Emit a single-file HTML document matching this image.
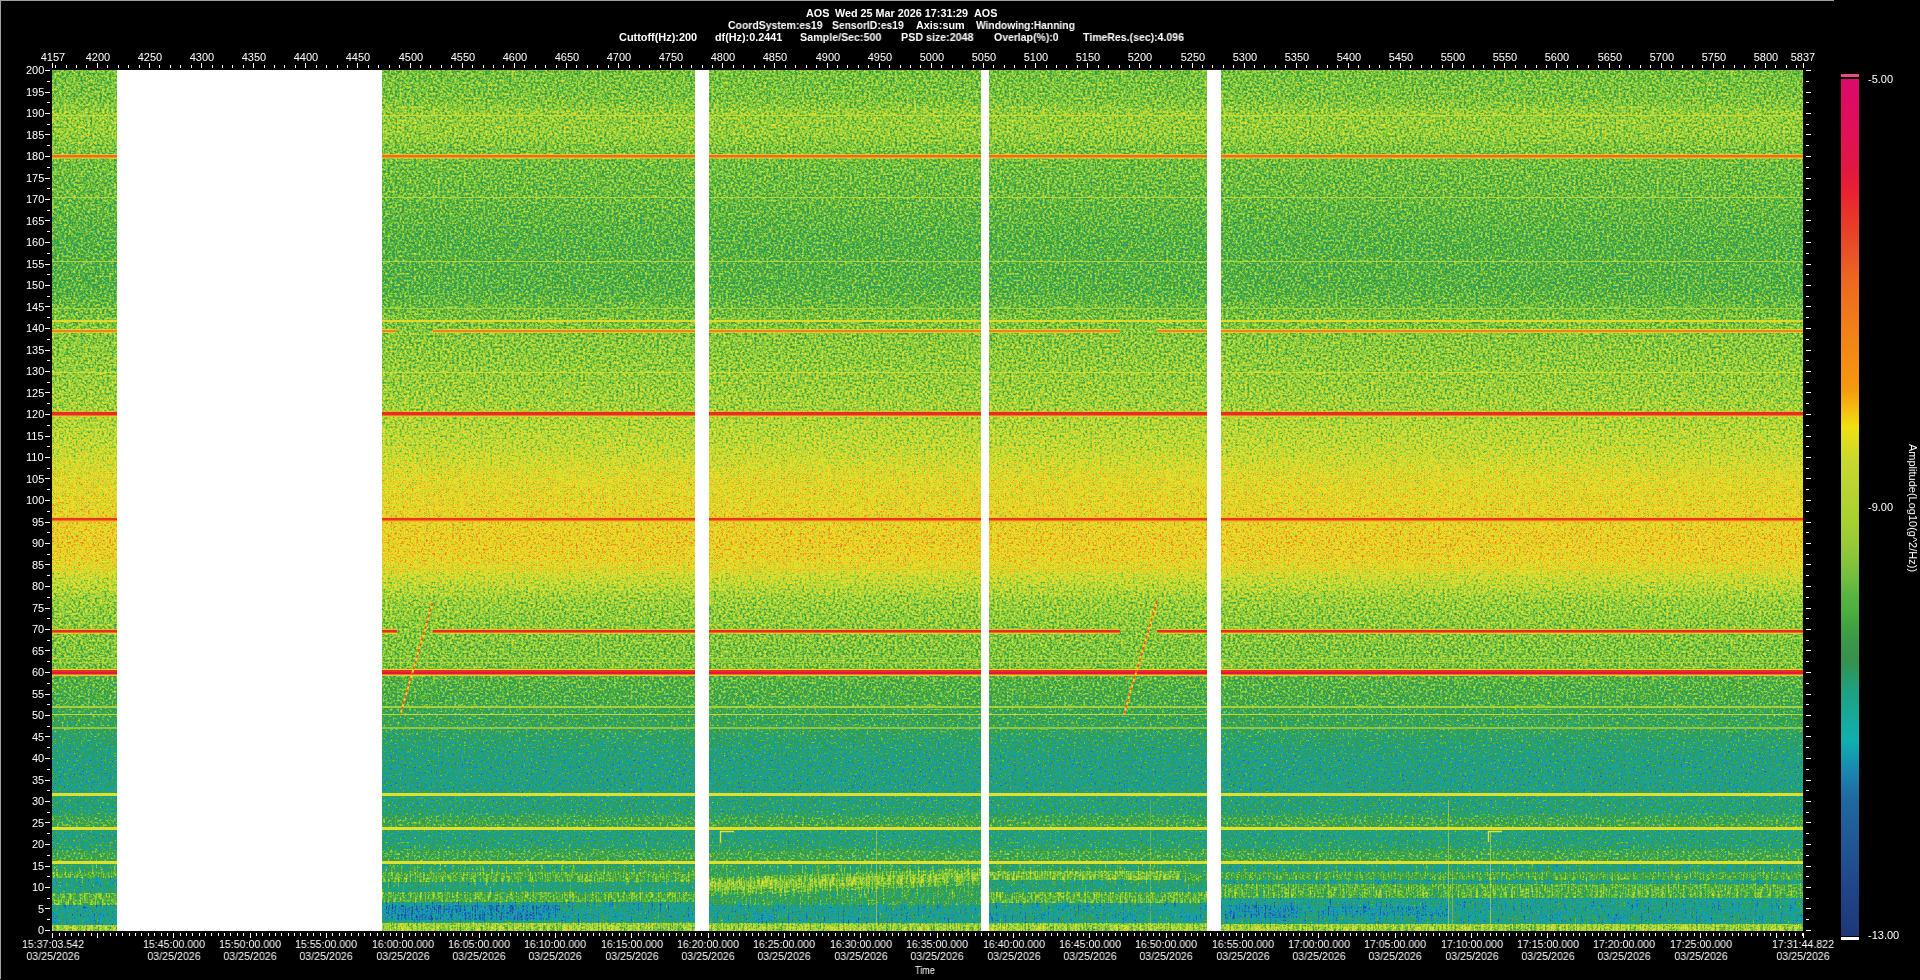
<!DOCTYPE html><html><head><meta charset="utf-8"><style>
html,body{margin:0;padding:0;background:#000;width:1920px;height:980px;overflow:hidden;}
body{position:relative;font-family:"Liberation Sans",sans-serif;color:#fff;}
.t{position:absolute;white-space:pre;line-height:12px;font-size:11px;will-change:transform;}
.b{font-size:10.8px;font-weight:bold;}
.c{text-align:center;width:1200px;}
svg{position:absolute;left:0;top:0;}
</style></head><body>
<div style="position:absolute;left:0;top:0;width:1834px;height:1px;background:#a0a0a0"></div>
<div style="position:absolute;left:0;top:0;width:1px;height:979px;background:#a0a0a0"></div>
<svg width="1920" height="980"><defs><linearGradient id="amp" gradientUnits="userSpaceOnUse" x1="0" y1="70" x2="0" y2="931"><stop offset="0.0000" stop-color="rgb(111,111,111)"/><stop offset="0.0348" stop-color="rgb(113,113,113)"/><stop offset="0.0488" stop-color="rgb(120,120,120)"/><stop offset="0.0755" stop-color="rgb(120,120,120)"/><stop offset="0.0929" stop-color="rgb(113,113,113)"/><stop offset="0.1069" stop-color="rgb(110,110,110)"/><stop offset="0.1510" stop-color="rgb(107,107,107)"/><stop offset="0.1974" stop-color="rgb(102,102,102)"/><stop offset="0.2555" stop-color="rgb(102,102,102)"/><stop offset="0.2729" stop-color="rgb(107,107,107)"/><stop offset="0.2880" stop-color="rgb(112,112,112)"/><stop offset="0.3078" stop-color="rgb(116,116,116)"/><stop offset="0.3484" stop-color="rgb(119,119,119)"/><stop offset="0.3949" stop-color="rgb(124,124,124)"/><stop offset="0.4065" stop-color="rgb(128,128,128)"/><stop offset="0.4413" stop-color="rgb(134,134,134)"/><stop offset="0.4762" stop-color="rgb(147,147,147)"/><stop offset="0.5168" stop-color="rgb(152,152,152)"/><stop offset="0.5459" stop-color="rgb(156,156,156)"/><stop offset="0.5691" stop-color="rgb(153,153,153)"/><stop offset="0.5865" stop-color="rgb(139,139,139)"/><stop offset="0.6156" stop-color="rgb(122,122,122)"/><stop offset="0.6446" stop-color="rgb(117,117,117)"/><stop offset="0.6945" stop-color="rgb(112,112,112)"/><stop offset="0.7085" stop-color="rgb(102,102,102)"/><stop offset="0.7375" stop-color="rgb(97,97,97)"/><stop offset="0.7433" stop-color="rgb(92,92,92)"/><stop offset="0.7642" stop-color="rgb(89,89,89)"/><stop offset="0.7782" stop-color="rgb(82,82,82)"/><stop offset="0.8014" stop-color="rgb(76,76,76)"/><stop offset="0.8362" stop-color="rgb(75,75,75)"/><stop offset="0.8444" stop-color="rgb(79,79,79)"/><stop offset="0.8618" stop-color="rgb(79,79,79)"/><stop offset="0.8688" stop-color="rgb(92,92,92)"/><stop offset="0.8780" stop-color="rgb(94,94,94)"/><stop offset="0.8862" stop-color="rgb(76,76,76)"/><stop offset="0.9036" stop-color="rgb(82,82,82)"/><stop offset="0.9082" stop-color="rgb(94,94,94)"/><stop offset="0.9175" stop-color="rgb(94,94,94)"/><stop offset="0.9233" stop-color="rgb(79,79,79)"/><stop offset="0.9292" stop-color="rgb(79,79,79)"/><stop offset="0.9326" stop-color="rgb(97,97,97)"/><stop offset="0.9396" stop-color="rgb(94,94,94)"/><stop offset="0.9419" stop-color="rgb(74,74,74)"/><stop offset="0.9454" stop-color="rgb(76,76,76)"/><stop offset="0.9489" stop-color="rgb(99,99,99)"/><stop offset="0.9582" stop-color="rgb(99,99,99)"/><stop offset="0.9617" stop-color="rgb(76,76,76)"/><stop offset="0.9663" stop-color="rgb(69,69,69)"/><stop offset="0.9849" stop-color="rgb(66,66,66)"/><stop offset="0.9895" stop-color="rgb(71,71,71)"/><stop offset="0.9919" stop-color="rgb(128,128,128)"/><stop offset="0.9942" stop-color="rgb(143,143,143)"/><stop offset="1.0000" stop-color="rgb(138,138,138)"/></linearGradient><filter id="sp" filterUnits="userSpaceOnUse" x="52" y="70" width="1751" height="795" color-interpolation-filters="sRGB"><feTurbulence type="fractalNoise" baseFrequency="0.42 0.45" numOctaves="2" seed="3" result="n"/><feColorMatrix in="n" type="matrix" values="1 0 0 0 0 1 0 0 0 0 1 0 0 0 0 0 0 0 0 1" result="ng"/><feComposite in="SourceGraphic" in2="ng" operator="arithmetic" k1="0" k2="1" k3="0.440" k4="-0.220" result="a"/><feComponentTransfer in="a"><feFuncR type="table" tableValues="0.118 0.118 0.118 0.119 0.119 0.120 0.120 0.120 0.121 0.121 0.122 0.122 0.122 0.123 0.123 0.124 0.124 0.124 0.125 0.125 0.125 0.125 0.125 0.125 0.125 0.125 0.125 0.125 0.125 0.125 0.125 0.125 0.125 0.123 0.120 0.117 0.114 0.111 0.108 0.105 0.102 0.099 0.096 0.093 0.090 0.087 0.084 0.081 0.078 0.081 0.084 0.087 0.090 0.093 0.096 0.099 0.102 0.108 0.115 0.122 0.128 0.135 0.141 0.149 0.157 0.165 0.173 0.184 0.196 0.208 0.220 0.229 0.239 0.249 0.259 0.269 0.278 0.288 0.298 0.314 0.329 0.345 0.361 0.376 0.392 0.408 0.424 0.443 0.463 0.482 0.502 0.522 0.541 0.561 0.580 0.598 0.616 0.633 0.651 0.669 0.686 0.704 0.722 0.737 0.753 0.769 0.784 0.800 0.816 0.831 0.847 0.857 0.867 0.876 0.886 0.896 0.906 0.916 0.925 0.927 0.929 0.931 0.933 0.935 0.937 0.939 0.941 0.941 0.941 0.941 0.941 0.941 0.941 0.941 0.941 0.941 0.941 0.941 0.941 0.941 0.941 0.941 0.941 0.941 0.941 0.941 0.941 0.941 0.941 0.940 0.939 0.937 0.936 0.935 0.933 0.932 0.931 0.929 0.928 0.927 0.925 0.924 0.922 0.921 0.919 0.918 0.916 0.915 0.913 0.911 0.910 0.907 0.904 0.900 0.897 0.894 0.891 0.888 0.885 0.882 0.878 0.878 0.878 0.878 0.878 0.878 0.878 0.878 0.878 0.878 0.878 0.877 0.875 0.874 0.872 0.871 0.869 0.867 0.866 0.864 0.863"/><feFuncG type="table" tableValues="0.220 0.223 0.226 0.229 0.232 0.235 0.238 0.242 0.245 0.248 0.251 0.254 0.257 0.260 0.264 0.267 0.270 0.273 0.276 0.279 0.282 0.293 0.303 0.314 0.324 0.335 0.345 0.356 0.366 0.376 0.387 0.397 0.408 0.424 0.439 0.455 0.471 0.486 0.502 0.518 0.533 0.547 0.561 0.575 0.588 0.602 0.616 0.629 0.643 0.643 0.643 0.643 0.643 0.643 0.643 0.643 0.643 0.641 0.638 0.635 0.633 0.630 0.627 0.624 0.620 0.616 0.612 0.610 0.608 0.606 0.604 0.613 0.622 0.630 0.639 0.648 0.657 0.666 0.675 0.684 0.694 0.704 0.714 0.724 0.733 0.743 0.753 0.761 0.769 0.776 0.784 0.792 0.800 0.808 0.816 0.820 0.824 0.827 0.831 0.835 0.839 0.843 0.847 0.849 0.851 0.853 0.855 0.857 0.859 0.861 0.863 0.867 0.871 0.875 0.878 0.882 0.886 0.890 0.894 0.880 0.867 0.853 0.839 0.825 0.812 0.798 0.784 0.769 0.753 0.737 0.722 0.706 0.690 0.675 0.659 0.643 0.627 0.614 0.601 0.588 0.575 0.562 0.549 0.536 0.523 0.510 0.497 0.484 0.471 0.458 0.444 0.431 0.418 0.405 0.392 0.379 0.366 0.353 0.340 0.327 0.314 0.301 0.289 0.276 0.264 0.251 0.238 0.226 0.213 0.201 0.188 0.182 0.176 0.169 0.163 0.157 0.151 0.144 0.138 0.132 0.125 0.119 0.113 0.107 0.100 0.094 0.088 0.082 0.075 0.069 0.063 0.060 0.058 0.056 0.053 0.051 0.049 0.046 0.044 0.042 0.039"/><feFuncB type="table" tableValues="0.471 0.477 0.484 0.491 0.497 0.504 0.511 0.517 0.524 0.531 0.537 0.544 0.551 0.557 0.564 0.571 0.577 0.584 0.591 0.597 0.604 0.611 0.618 0.625 0.633 0.640 0.647 0.654 0.661 0.669 0.676 0.683 0.690 0.694 0.698 0.702 0.706 0.710 0.714 0.718 0.722 0.718 0.714 0.710 0.706 0.702 0.698 0.694 0.690 0.678 0.667 0.655 0.643 0.631 0.620 0.608 0.596 0.575 0.554 0.533 0.512 0.492 0.471 0.443 0.416 0.388 0.361 0.335 0.310 0.284 0.259 0.258 0.257 0.256 0.255 0.254 0.253 0.252 0.251 0.251 0.251 0.251 0.251 0.251 0.251 0.251 0.251 0.249 0.247 0.245 0.243 0.241 0.239 0.237 0.235 0.233 0.231 0.229 0.227 0.225 0.224 0.222 0.220 0.216 0.212 0.208 0.204 0.200 0.196 0.192 0.188 0.184 0.180 0.176 0.173 0.169 0.165 0.161 0.157 0.153 0.149 0.145 0.141 0.137 0.133 0.129 0.125 0.125 0.125 0.125 0.125 0.125 0.125 0.125 0.125 0.125 0.125 0.125 0.125 0.125 0.125 0.125 0.125 0.125 0.125 0.125 0.125 0.125 0.125 0.125 0.125 0.125 0.125 0.125 0.125 0.125 0.125 0.125 0.125 0.125 0.125 0.125 0.125 0.125 0.125 0.125 0.125 0.125 0.125 0.125 0.125 0.132 0.138 0.144 0.151 0.157 0.163 0.169 0.176 0.182 0.188 0.201 0.213 0.226 0.238 0.251 0.264 0.276 0.289 0.301 0.314 0.324 0.334 0.344 0.355 0.365 0.375 0.385 0.395 0.405 0.416"/><feFuncA type="identity"/></feComponentTransfer></filter><filter id="sp2" filterUnits="userSpaceOnUse" x="52" y="864" width="1751" height="67" color-interpolation-filters="sRGB"><feTurbulence type="fractalNoise" baseFrequency="0.5 0.55" numOctaves="2" seed="5" result="n"/><feColorMatrix in="n" type="matrix" values="1 0 0 0 0 1 0 0 0 0 1 0 0 0 0 0 0 0 0 1" result="ng"/><feComposite in="SourceGraphic" in2="ng" operator="arithmetic" k1="0" k2="1" k3="0.300" k4="-0.150" result="a"/><feTurbulence type="fractalNoise" baseFrequency="0.6 0.08" numOctaves="2" seed="16" result="n2"/><feColorMatrix in="n2" type="matrix" values="1 0 0 0 0 1 0 0 0 0 1 0 0 0 0 0 0 0 0 1" result="ng2"/><feComposite in="a" in2="ng2" operator="arithmetic" k1="0" k2="1" k3="0.320" k4="-0.160" result="a2"/><feComponentTransfer in="a2"><feFuncR type="table" tableValues="0.118 0.118 0.118 0.119 0.119 0.120 0.120 0.120 0.121 0.121 0.122 0.122 0.122 0.123 0.123 0.124 0.124 0.124 0.125 0.125 0.125 0.125 0.125 0.125 0.125 0.125 0.125 0.125 0.125 0.125 0.125 0.125 0.125 0.123 0.120 0.117 0.114 0.111 0.108 0.105 0.102 0.099 0.096 0.093 0.090 0.087 0.084 0.081 0.078 0.081 0.084 0.087 0.090 0.093 0.096 0.099 0.102 0.108 0.115 0.122 0.128 0.135 0.141 0.149 0.157 0.165 0.173 0.184 0.196 0.208 0.220 0.229 0.239 0.249 0.259 0.269 0.278 0.288 0.298 0.314 0.329 0.345 0.361 0.376 0.392 0.408 0.424 0.443 0.463 0.482 0.502 0.522 0.541 0.561 0.580 0.598 0.616 0.633 0.651 0.669 0.686 0.704 0.722 0.737 0.753 0.769 0.784 0.800 0.816 0.831 0.847 0.857 0.867 0.876 0.886 0.896 0.906 0.916 0.925 0.927 0.929 0.931 0.933 0.935 0.937 0.939 0.941 0.941 0.941 0.941 0.941 0.941 0.941 0.941 0.941 0.941 0.941 0.941 0.941 0.941 0.941 0.941 0.941 0.941 0.941 0.941 0.941 0.941 0.941 0.940 0.939 0.937 0.936 0.935 0.933 0.932 0.931 0.929 0.928 0.927 0.925 0.924 0.922 0.921 0.919 0.918 0.916 0.915 0.913 0.911 0.910 0.907 0.904 0.900 0.897 0.894 0.891 0.888 0.885 0.882 0.878 0.878 0.878 0.878 0.878 0.878 0.878 0.878 0.878 0.878 0.878 0.877 0.875 0.874 0.872 0.871 0.869 0.867 0.866 0.864 0.863"/><feFuncG type="table" tableValues="0.220 0.223 0.226 0.229 0.232 0.235 0.238 0.242 0.245 0.248 0.251 0.254 0.257 0.260 0.264 0.267 0.270 0.273 0.276 0.279 0.282 0.293 0.303 0.314 0.324 0.335 0.345 0.356 0.366 0.376 0.387 0.397 0.408 0.424 0.439 0.455 0.471 0.486 0.502 0.518 0.533 0.547 0.561 0.575 0.588 0.602 0.616 0.629 0.643 0.643 0.643 0.643 0.643 0.643 0.643 0.643 0.643 0.641 0.638 0.635 0.633 0.630 0.627 0.624 0.620 0.616 0.612 0.610 0.608 0.606 0.604 0.613 0.622 0.630 0.639 0.648 0.657 0.666 0.675 0.684 0.694 0.704 0.714 0.724 0.733 0.743 0.753 0.761 0.769 0.776 0.784 0.792 0.800 0.808 0.816 0.820 0.824 0.827 0.831 0.835 0.839 0.843 0.847 0.849 0.851 0.853 0.855 0.857 0.859 0.861 0.863 0.867 0.871 0.875 0.878 0.882 0.886 0.890 0.894 0.880 0.867 0.853 0.839 0.825 0.812 0.798 0.784 0.769 0.753 0.737 0.722 0.706 0.690 0.675 0.659 0.643 0.627 0.614 0.601 0.588 0.575 0.562 0.549 0.536 0.523 0.510 0.497 0.484 0.471 0.458 0.444 0.431 0.418 0.405 0.392 0.379 0.366 0.353 0.340 0.327 0.314 0.301 0.289 0.276 0.264 0.251 0.238 0.226 0.213 0.201 0.188 0.182 0.176 0.169 0.163 0.157 0.151 0.144 0.138 0.132 0.125 0.119 0.113 0.107 0.100 0.094 0.088 0.082 0.075 0.069 0.063 0.060 0.058 0.056 0.053 0.051 0.049 0.046 0.044 0.042 0.039"/><feFuncB type="table" tableValues="0.471 0.477 0.484 0.491 0.497 0.504 0.511 0.517 0.524 0.531 0.537 0.544 0.551 0.557 0.564 0.571 0.577 0.584 0.591 0.597 0.604 0.611 0.618 0.625 0.633 0.640 0.647 0.654 0.661 0.669 0.676 0.683 0.690 0.694 0.698 0.702 0.706 0.710 0.714 0.718 0.722 0.718 0.714 0.710 0.706 0.702 0.698 0.694 0.690 0.678 0.667 0.655 0.643 0.631 0.620 0.608 0.596 0.575 0.554 0.533 0.512 0.492 0.471 0.443 0.416 0.388 0.361 0.335 0.310 0.284 0.259 0.258 0.257 0.256 0.255 0.254 0.253 0.252 0.251 0.251 0.251 0.251 0.251 0.251 0.251 0.251 0.251 0.249 0.247 0.245 0.243 0.241 0.239 0.237 0.235 0.233 0.231 0.229 0.227 0.225 0.224 0.222 0.220 0.216 0.212 0.208 0.204 0.200 0.196 0.192 0.188 0.184 0.180 0.176 0.173 0.169 0.165 0.161 0.157 0.153 0.149 0.145 0.141 0.137 0.133 0.129 0.125 0.125 0.125 0.125 0.125 0.125 0.125 0.125 0.125 0.125 0.125 0.125 0.125 0.125 0.125 0.125 0.125 0.125 0.125 0.125 0.125 0.125 0.125 0.125 0.125 0.125 0.125 0.125 0.125 0.125 0.125 0.125 0.125 0.125 0.125 0.125 0.125 0.125 0.125 0.125 0.125 0.125 0.125 0.125 0.125 0.132 0.138 0.144 0.151 0.157 0.163 0.169 0.176 0.182 0.188 0.201 0.213 0.226 0.238 0.251 0.264 0.276 0.289 0.301 0.314 0.324 0.334 0.344 0.355 0.365 0.375 0.385 0.395 0.405 0.416"/><feFuncA type="identity"/></feComponentTransfer></filter></defs><g filter="url(#sp)"><rect x="52" y="70" width="1751" height="861" fill="url(#amp)"/></g><g filter="url(#sp2)"><rect x="52" y="864" width="1751" height="67" fill="url(#amp)"/><rect x="52" y="865" width="65" height="7" fill="rgb(87,87,87)"/><rect x="52" y="872" width="65" height="6" fill="rgb(102,102,102)"/><rect x="52" y="878" width="65" height="15" fill="rgb(76,76,76)"/><rect x="52" y="893" width="65" height="12" fill="rgb(105,105,105)"/><rect x="52" y="905" width="65" height="20" fill="rgb(70,70,70)"/><rect x="52" y="925" width="65" height="6" fill="rgb(122,122,122)"/><rect x="382" y="865" width="313" height="7" fill="rgb(87,87,87)"/><rect x="382" y="872" width="313" height="10" fill="rgb(102,102,102)"/><rect x="382" y="882" width="313" height="10" fill="rgb(79,79,79)"/><rect x="382" y="892" width="313" height="10" fill="rgb(102,102,102)"/><rect x="382" y="902" width="313" height="20" fill="rgb(71,71,71)"/><rect x="382" y="923" width="313" height="8" fill="rgb(122,122,122)"/><rect x="385" y="905" width="175" height="15" fill="rgb(54,54,54)"/><rect x="709" y="865" width="272" height="40" fill="rgb(89,89,89)"/><rect x="709" y="905" width="272" height="18" fill="rgb(71,71,71)"/><rect x="709" y="924" width="272" height="7" fill="rgb(122,122,122)"/><path d="M709 878L981 868V885L709 896Z" fill="rgb(105,105,105)"/><path d="M709 882L981 872V881L709 891Z" fill="rgb(117,117,117)"/><rect x="989" y="865" width="218" height="6" fill="rgb(87,87,87)"/><rect x="989" y="880" width="218" height="12" fill="rgb(79,79,79)"/><rect x="989" y="892" width="218" height="11" fill="rgb(105,105,105)"/><rect x="989" y="903" width="218" height="20" fill="rgb(71,71,71)"/><rect x="989" y="924" width="218" height="7" fill="rgb(122,122,122)"/><rect x="989" y="871" width="191" height="9" fill="rgb(112,112,112)"/><rect x="1180" y="871" width="27" height="9" fill="rgb(92,92,92)"/><rect x="1221" y="865" width="582" height="7" fill="rgb(79,79,79)"/><rect x="1221" y="872" width="582" height="8" fill="rgb(97,97,97)"/><rect x="1221" y="880" width="582" height="4" fill="rgb(76,76,76)"/><rect x="1221" y="884" width="582" height="14" fill="rgb(102,102,102)"/><rect x="1221" y="898" width="582" height="24" fill="rgb(71,71,71)"/><rect x="1221" y="922" width="582" height="2" fill="rgb(76,76,76)"/><rect x="1221" y="924" width="582" height="7" fill="rgb(122,122,122)"/><rect x="1225" y="905" width="75" height="13" fill="rgb(56,56,56)"/><rect x="1320" y="906" width="130" height="10" fill="rgb(60,60,60)"/></g><clipPath id="lc"><path d="M52 70H1803V931H52Z M397 326H433V336H397Z M1120 326H1157V336H1120Z M397 624H433V636H397Z M1120 624H1157V636H1120Z" clip-rule="evenodd"/></clipPath><g clip-path="url(#lc)"><rect x="52" y="115" width="1751" height="1" fill="rgb(221,222,46)" opacity="0.70"/><rect x="52" y="154" width="1751" height="1" fill="rgb(239,207,34)" opacity="0.80"/><rect x="52" y="155" width="1751" height="2" fill="rgb(239,107,32)" opacity="1.00"/><rect x="52" y="157" width="1751" height="1" fill="rgb(240,160,32)" opacity="1.00"/><rect x="52" y="158" width="1751" height="1" fill="rgb(231,226,42)" opacity="0.50"/><rect x="52" y="197" width="1751" height="1" fill="rgb(200,218,52)" opacity="0.80"/><rect x="52" y="261" width="1751" height="1" fill="rgb(200,218,52)" opacity="0.80"/><rect x="52" y="308" width="1751" height="1" fill="rgb(192,217,54)" opacity="0.70"/><rect x="52" y="320" width="1751" height="2" fill="rgb(237,221,38)" opacity="0.90"/><rect x="52" y="329" width="1751" height="1" fill="rgb(237,221,38)" opacity="0.80"/><rect x="52" y="330" width="1751" height="2" fill="rgb(240,133,32)" opacity="1.00"/><rect x="52" y="332" width="1751" height="1" fill="rgb(239,207,34)" opacity="0.80"/><rect x="52" y="372" width="1751" height="1" fill="rgb(221,222,46)" opacity="0.80"/><rect x="52" y="411" width="1751" height="1" fill="rgb(240,192,32)" opacity="0.60"/><rect x="52" y="412" width="1751" height="3" fill="rgb(230,45,35)" opacity="1.00"/><rect x="52" y="415" width="1751" height="1" fill="rgb(240,120,32)" opacity="1.00"/><rect x="52" y="416" width="1751" height="1" fill="rgb(239,207,34)" opacity="0.70"/><rect x="52" y="517" width="1751" height="1" fill="rgb(240,176,32)" opacity="0.50"/><rect x="52" y="518" width="1751" height="2" fill="rgb(233,54,32)" opacity="1.00"/><rect x="52" y="520" width="1751" height="1" fill="rgb(240,120,32)" opacity="1.00"/><rect x="52" y="521" width="1751" height="1" fill="rgb(240,176,32)" opacity="0.70"/><rect x="52" y="569" width="1751" height="1" fill="rgb(240,192,32)" opacity="0.70"/><rect x="52" y="629" width="1751" height="1" fill="rgb(240,192,32)" opacity="0.90"/><rect x="52" y="630" width="1751" height="2" fill="rgb(230,45,35)" opacity="1.00"/><rect x="52" y="632" width="1751" height="1" fill="rgb(239,107,32)" opacity="1.00"/><rect x="52" y="633" width="1751" height="1" fill="rgb(237,221,38)" opacity="0.70"/><rect x="52" y="658" width="1751" height="1" fill="rgb(192,217,54)" opacity="0.60"/><rect x="52" y="662" width="1751" height="1" fill="rgb(192,217,54)" opacity="0.60"/><rect x="52" y="669" width="1751" height="1" fill="rgb(239,207,34)" opacity="1.00"/><rect x="52" y="670" width="1751" height="2" fill="rgb(232,48,32)" opacity="1.00"/><rect x="52" y="672" width="1751" height="2" fill="rgb(224,22,67)" opacity="1.00"/><rect x="52" y="674" width="1751" height="1" fill="rgb(240,120,32)" opacity="1.00"/><rect x="52" y="675" width="1751" height="1" fill="rgb(239,207,34)" opacity="0.90"/><rect x="52" y="706" width="1751" height="2" fill="rgb(192,217,54)" opacity="0.80"/><rect x="52" y="714" width="1751" height="1" fill="rgb(208,219,50)" opacity="0.90"/><rect x="52" y="727" width="1751" height="2" fill="rgb(175,214,57)" opacity="0.70"/><rect x="52" y="793" width="1751" height="3" fill="rgb(234,227,41)" opacity="0.95"/><rect x="52" y="827" width="1751" height="3" fill="rgb(234,227,41)" opacity="0.95"/><rect x="52" y="861" width="1751" height="3" fill="rgb(234,227,41)" opacity="0.95"/></g><path d="M720.5 842V831.5H734M1488.5 842V831.5H1502" stroke="rgb(231,226,42)" stroke-width="1.4" fill="none"/><path d="M876.5 830V931" stroke="rgb(221,222,46)" stroke-width="1" opacity="0.50" fill="none"/><path d="M1448.5 800V931" stroke="rgb(221,222,46)" stroke-width="1" opacity="0.55" fill="none"/><path d="M1490.5 832V931" stroke="rgb(221,222,46)" stroke-width="1" opacity="0.60" fill="none"/><path d="M1150.5 800V931" stroke="rgb(221,222,46)" stroke-width="1" opacity="0.30" fill="none"/><path d="M1452.5 870V931" stroke="rgb(221,222,46)" stroke-width="1" opacity="0.40" fill="none"/><path d="M432.5 603L400.5 714" stroke="rgb(237,221,38)" stroke-width="1.8" fill="none"/><path d="M432.5 603L400.5 714" stroke="rgb(236,80,32)" stroke-width="1.8" stroke-dasharray="3 3" fill="none"/><path d="M1157 601L1124 714" stroke="rgb(237,221,38)" stroke-width="1.8" fill="none"/><path d="M1157 601L1124 714" stroke="rgb(236,80,32)" stroke-width="1.8" stroke-dasharray="3 3" fill="none"/><rect x="117" y="70" width="265" height="861" fill="#fff"/><rect x="695" y="70" width="14" height="861" fill="#fff"/><rect x="981" y="70" width="8" height="861" fill="#fff"/><rect x="1207" y="70" width="14" height="861" fill="#fff"/><linearGradient id="cb" gradientUnits="userSpaceOnUse" x1="0" y1="79" x2="0" y2="936"><stop offset="0.0000" stop-color="#dc0a6a"/><stop offset="0.0595" stop-color="#e01058"/><stop offset="0.1062" stop-color="#e01840"/><stop offset="0.1295" stop-color="#e82030"/><stop offset="0.1762" stop-color="#e84028"/><stop offset="0.1995" stop-color="#e85028"/><stop offset="0.2345" stop-color="#ec6820"/><stop offset="0.2929" stop-color="#f08018"/><stop offset="0.3629" stop-color="#f59a10"/><stop offset="0.4061" stop-color="#f0e010"/><stop offset="0.4446" stop-color="#c8d830"/><stop offset="0.5146" stop-color="#a8d030"/><stop offset="0.5438" stop-color="#98c838"/><stop offset="0.5613" stop-color="#88c438"/><stop offset="0.5846" stop-color="#70bc40"/><stop offset="0.6021" stop-color="#58b440"/><stop offset="0.6196" stop-color="#4cb040"/><stop offset="0.6371" stop-color="#40a440"/><stop offset="0.6546" stop-color="#3c9848"/><stop offset="0.6779" stop-color="#38904c"/><stop offset="0.6919" stop-color="#2a9860"/><stop offset="0.7130" stop-color="#20a080"/><stop offset="0.7713" stop-color="#10b0b0"/><stop offset="0.8063" stop-color="#1888b0"/><stop offset="0.8413" stop-color="#2068a0"/><stop offset="0.9347" stop-color="#20488a"/><stop offset="1.0000" stop-color="#1e3878"/></linearGradient><rect x="1841" y="74" width="18" height="3" fill="#e84a88"/><rect x="1841" y="79" width="18" height="857" fill="url(#cb)"/><rect x="1841" y="937" width="18" height="3" fill="#fff"/><path d="M45 70.5h5M1806 70.5h5M47 81.5h3M1806 81.5h3M45 92.5h5M1806 92.5h5M47 102.5h3M1806 102.5h3M45 113.5h5M1806 113.5h5M47 124.5h3M1806 124.5h3M45 134.5h5M1806 134.5h5M47 145.5h3M1806 145.5h3M45 156.5h5M1806 156.5h5M47 167.5h3M1806 167.5h3M45 178.5h5M1806 178.5h5M47 188.5h3M1806 188.5h3M45 199.5h5M1806 199.5h5M47 210.5h3M1806 210.5h3M45 220.5h5M1806 220.5h5M47 231.5h3M1806 231.5h3M45 242.5h5M1806 242.5h5M47 253.5h3M1806 253.5h3M45 264.5h5M1806 264.5h5M47 274.5h3M1806 274.5h3M45 285.5h5M1806 285.5h5M47 296.5h3M1806 296.5h3M45 306.5h5M1806 306.5h5M47 317.5h3M1806 317.5h3M45 328.5h5M1806 328.5h5M47 339.5h3M1806 339.5h3M45 350.5h5M1806 350.5h5M47 360.5h3M1806 360.5h3M45 371.5h5M1806 371.5h5M47 382.5h3M1806 382.5h3M45 392.5h5M1806 392.5h5M47 403.5h3M1806 403.5h3M45 414.5h5M1806 414.5h5M47 425.5h3M1806 425.5h3M45 436.5h5M1806 436.5h5M47 446.5h3M1806 446.5h3M45 457.5h5M1806 457.5h5M47 468.5h3M1806 468.5h3M45 478.5h5M1806 478.5h5M47 489.5h3M1806 489.5h3M45 500.5h5M1806 500.5h5M47 511.5h3M1806 511.5h3M45 522.5h5M1806 522.5h5M47 532.5h3M1806 532.5h3M45 543.5h5M1806 543.5h5M47 554.5h3M1806 554.5h3M45 564.5h5M1806 564.5h5M47 575.5h3M1806 575.5h3M45 586.5h5M1806 586.5h5M47 597.5h3M1806 597.5h3M45 608.5h5M1806 608.5h5M47 618.5h3M1806 618.5h3M45 629.5h5M1806 629.5h5M47 640.5h3M1806 640.5h3M45 650.5h5M1806 650.5h5M47 661.5h3M1806 661.5h3M45 672.5h5M1806 672.5h5M47 683.5h3M1806 683.5h3M45 694.5h5M1806 694.5h5M47 704.5h3M1806 704.5h3M45 715.5h5M1806 715.5h5M47 726.5h3M1806 726.5h3M45 736.5h5M1806 736.5h5M47 747.5h3M1806 747.5h3M45 758.5h5M1806 758.5h5M47 769.5h3M1806 769.5h3M45 780.5h5M1806 780.5h5M47 790.5h3M1806 790.5h3M45 801.5h5M1806 801.5h5M47 812.5h3M1806 812.5h3M45 822.5h5M1806 822.5h5M47 833.5h3M1806 833.5h3M45 844.5h5M1806 844.5h5M47 855.5h3M1806 855.5h3M45 866.5h5M1806 866.5h5M47 876.5h3M1806 876.5h3M45 887.5h5M1806 887.5h5M47 898.5h3M1806 898.5h3M45 908.5h5M1806 908.5h5M47 919.5h3M1806 919.5h3M45 930.5h5M1806 930.5h5M55.5 65v3M66.5 65v3M76.5 65v3M86.5 65v3M97.5 63v5M107.5 65v3M118.5 65v3M128.5 65v3M139.5 65v3M149.5 63v5M159.5 65v3M170.5 65v3M180.5 65v3M191.5 65v3M201.5 63v5M212.5 65v3M222.5 65v3M232.5 65v3M243.5 65v3M253.5 63v5M264.5 65v3M274.5 65v3M284.5 65v3M295.5 65v3M305.5 63v5M316.5 65v3M326.5 65v3M337.5 65v3M347.5 65v3M357.5 63v5M368.5 65v3M378.5 65v3M389.5 65v3M399.5 65v3M410.5 63v5M420.5 65v3M430.5 65v3M441.5 65v3M451.5 65v3M462.5 63v5M472.5 65v3M483.5 65v3M493.5 65v3M503.5 65v3M514.5 63v5M524.5 65v3M535.5 65v3M545.5 65v3M556.5 65v3M566.5 63v5M576.5 65v3M587.5 65v3M597.5 65v3M608.5 65v3M618.5 63v5M629.5 65v3M639.5 65v3M649.5 65v3M660.5 65v3M670.5 63v5M681.5 65v3M691.5 65v3M702.5 65v3M712.5 65v3M722.5 63v5M733.5 65v3M743.5 65v3M754.5 65v3M764.5 65v3M774.5 63v5M785.5 65v3M795.5 65v3M806.5 65v3M816.5 65v3M827.5 63v5M837.5 65v3M847.5 65v3M858.5 65v3M868.5 65v3M879.5 63v5M889.5 65v3M900.5 65v3M910.5 65v3M920.5 65v3M931.5 63v5M941.5 65v3M952.5 65v3M962.5 65v3M973.5 65v3M983.5 63v5M993.5 65v3M1004.5 65v3M1014.5 65v3M1025.5 65v3M1035.5 63v5M1046.5 65v3M1056.5 65v3M1066.5 65v3M1077.5 65v3M1087.5 63v5M1098.5 65v3M1108.5 65v3M1119.5 65v3M1129.5 65v3M1139.5 63v5M1150.5 65v3M1160.5 65v3M1171.5 65v3M1181.5 65v3M1192.5 63v5M1202.5 65v3M1212.5 65v3M1223.5 65v3M1233.5 65v3M1244.5 63v5M1254.5 65v3M1264.5 65v3M1275.5 65v3M1285.5 65v3M1296.5 63v5M1306.5 65v3M1317.5 65v3M1327.5 65v3M1337.5 65v3M1348.5 63v5M1358.5 65v3M1369.5 65v3M1379.5 65v3M1390.5 65v3M1400.5 63v5M1410.5 65v3M1421.5 65v3M1431.5 65v3M1442.5 65v3M1452.5 63v5M1463.5 65v3M1473.5 65v3M1483.5 65v3M1494.5 65v3M1504.5 63v5M1515.5 65v3M1525.5 65v3M1536.5 65v3M1546.5 65v3M1556.5 63v5M1567.5 65v3M1577.5 65v3M1588.5 65v3M1598.5 65v3M1609.5 63v5M1619.5 65v3M1629.5 65v3M1640.5 65v3M1650.5 65v3M1661.5 63v5M1671.5 65v3M1682.5 65v3M1692.5 65v3M1702.5 65v3M1713.5 63v5M1723.5 65v3M1734.5 65v3M1744.5 65v3M1755.5 65v3M1765.5 63v5M1775.5 65v3M1786.5 65v3M1796.5 65v3M52.5 63v5M1803.5 63v5M52.5 933v3M59.5 933v3M65.5 933v3M71.5 933v3M78.5 933v3M84.5 933v3M91.5 933v3M97.5 933v5M103.5 933v3M110.5 933v3M116.5 933v3M122.5 933v3M129.5 933v3M135.5 933v3M141.5 933v3M148.5 933v3M154.5 933v3M161.5 933v3M167.5 933v3M173.5 933v5M180.5 933v3M186.5 933v3M192.5 933v3M199.5 933v3M205.5 933v3M211.5 933v3M218.5 933v3M224.5 933v3M230.5 933v3M237.5 933v3M243.5 933v3M250.5 933v5M256.5 933v3M262.5 933v3M269.5 933v3M275.5 933v3M281.5 933v3M288.5 933v3M294.5 933v3M300.5 933v3M307.5 933v3M313.5 933v3M320.5 933v3M326.5 933v5M332.5 933v3M339.5 933v3M345.5 933v3M351.5 933v3M358.5 933v3M364.5 933v3M370.5 933v3M377.5 933v3M383.5 933v3M390.5 933v3M396.5 933v3M402.5 933v5M409.5 933v3M415.5 933v3M421.5 933v3M428.5 933v3M434.5 933v3M440.5 933v3M447.5 933v3M453.5 933v3M460.5 933v3M466.5 933v3M472.5 933v3M479.5 933v5M485.5 933v3M491.5 933v3M498.5 933v3M504.5 933v3M510.5 933v3M517.5 933v3M523.5 933v3M529.5 933v3M536.5 933v3M542.5 933v3M549.5 933v3M555.5 933v5M561.5 933v3M568.5 933v3M574.5 933v3M580.5 933v3M587.5 933v3M593.5 933v3M599.5 933v3M606.5 933v3M612.5 933v3M619.5 933v3M625.5 933v3M631.5 933v5M638.5 933v3M644.5 933v3M650.5 933v3M657.5 933v3M663.5 933v3M669.5 933v3M676.5 933v3M682.5 933v3M689.5 933v3M695.5 933v3M701.5 933v3M708.5 933v5M714.5 933v3M720.5 933v3M727.5 933v3M733.5 933v3M739.5 933v3M746.5 933v3M752.5 933v3M758.5 933v3M765.5 933v3M771.5 933v3M778.5 933v3M784.5 933v5M790.5 933v3M797.5 933v3M803.5 933v3M809.5 933v3M816.5 933v3M822.5 933v3M828.5 933v3M835.5 933v3M841.5 933v3M848.5 933v3M854.5 933v3M860.5 933v5M867.5 933v3M873.5 933v3M879.5 933v3M886.5 933v3M892.5 933v3M898.5 933v3M905.5 933v3M911.5 933v3M918.5 933v3M924.5 933v3M930.5 933v3M937.5 933v5M943.5 933v3M949.5 933v3M956.5 933v3M962.5 933v3M968.5 933v3M975.5 933v3M981.5 933v3M988.5 933v3M994.5 933v3M1000.5 933v3M1007.5 933v3M1013.5 933v5M1019.5 933v3M1026.5 933v3M1032.5 933v3M1038.5 933v3M1045.5 933v3M1051.5 933v3M1057.5 933v3M1064.5 933v3M1070.5 933v3M1077.5 933v3M1083.5 933v3M1089.5 933v5M1096.5 933v3M1102.5 933v3M1108.5 933v3M1115.5 933v3M1121.5 933v3M1127.5 933v3M1134.5 933v3M1140.5 933v3M1147.5 933v3M1153.5 933v3M1159.5 933v3M1166.5 933v5M1172.5 933v3M1178.5 933v3M1185.5 933v3M1191.5 933v3M1197.5 933v3M1204.5 933v3M1210.5 933v3M1217.5 933v3M1223.5 933v3M1229.5 933v3M1236.5 933v3M1242.5 933v5M1248.5 933v3M1255.5 933v3M1261.5 933v3M1267.5 933v3M1274.5 933v3M1280.5 933v3M1286.5 933v3M1293.5 933v3M1299.5 933v3M1306.5 933v3M1312.5 933v3M1318.5 933v5M1325.5 933v3M1331.5 933v3M1337.5 933v3M1344.5 933v3M1350.5 933v3M1356.5 933v3M1363.5 933v3M1369.5 933v3M1376.5 933v3M1382.5 933v3M1388.5 933v3M1395.5 933v5M1401.5 933v3M1407.5 933v3M1414.5 933v3M1420.5 933v3M1426.5 933v3M1433.5 933v3M1439.5 933v3M1446.5 933v3M1452.5 933v3M1458.5 933v3M1465.5 933v3M1471.5 933v5M1477.5 933v3M1484.5 933v3M1490.5 933v3M1496.5 933v3M1503.5 933v3M1509.5 933v3M1516.5 933v3M1522.5 933v3M1528.5 933v3M1535.5 933v3M1541.5 933v3M1547.5 933v5M1554.5 933v3M1560.5 933v3M1566.5 933v3M1573.5 933v3M1579.5 933v3M1585.5 933v3M1592.5 933v3M1598.5 933v3M1605.5 933v3M1611.5 933v3M1617.5 933v3M1624.5 933v5M1630.5 933v3M1636.5 933v3M1643.5 933v3M1649.5 933v3M1655.5 933v3M1662.5 933v3M1668.5 933v3M1675.5 933v3M1681.5 933v3M1687.5 933v3M1694.5 933v3M1700.5 933v5M1706.5 933v3M1713.5 933v3M1719.5 933v3M1725.5 933v3M1732.5 933v3M1738.5 933v3M1745.5 933v3M1751.5 933v3M1757.5 933v3M1764.5 933v3M1770.5 933v3M1776.5 933v5M1783.5 933v3M1789.5 933v3M1795.5 933v3M1802.5 933v3M52.5 933v5M1803.5 933v5" stroke="#fff" stroke-width="1" fill="none"/></svg>
<div class="t b" style="left:805.7px;top:7.0px">AOS</div>
<div class="t b" style="left:834.9px;top:7.0px">Wed 25 Mar 2026 17:31:29</div>
<div class="t b" style="left:973.7px;top:7.0px">AOS</div>
<div class="t b" style="left:728.4px;top:19.0px;transform:scaleX(0.967);transform-origin:0 0">CoordSystem:es19</div>
<div class="t b" style="left:832.2px;top:19.0px;transform:scaleX(0.956);transform-origin:0 0">SensorID:es19</div>
<div class="t b" style="left:916.0px;top:19.0px">Axis:sum</div>
<div class="t b" style="left:976.0px;top:19.0px;transform:scaleX(0.948);transform-origin:0 0">Windowing:Hanning</div>
<div class="t b" style="left:619.0px;top:31.0px;transform:scaleX(1.010);transform-origin:0 0">Cuttoff(Hz):200</div>
<div class="t b" style="left:715.0px;top:31.0px">df(Hz):0.2441</div>
<div class="t b" style="left:799.6px;top:31.0px;transform:scaleX(0.990);transform-origin:0 0">Sample/Sec:500</div>
<div class="t b" style="left:900.8px;top:31.0px;transform:scaleX(0.990);transform-origin:0 0">PSD size:2048</div>
<div class="t b" style="left:994.0px;top:31.0px;transform:scaleX(0.970);transform-origin:0 0">Overlap(%):0</div>
<div class="t b" style="left:1082.7px;top:31.0px;transform:scaleX(0.974);transform-origin:0 0">TimeRes.(sec):4.096</div>
<div class="t  c" style="left:-547.5px;top:51.0px">4157</div>
<div class="t  c" style="left:-502.5px;top:51.0px">4200</div>
<div class="t  c" style="left:-450.5px;top:51.0px">4250</div>
<div class="t  c" style="left:-398.5px;top:51.0px">4300</div>
<div class="t  c" style="left:-346.5px;top:51.0px">4350</div>
<div class="t  c" style="left:-294.5px;top:51.0px">4400</div>
<div class="t  c" style="left:-242.5px;top:51.0px">4450</div>
<div class="t  c" style="left:-189.5px;top:51.0px">4500</div>
<div class="t  c" style="left:-137.5px;top:51.0px">4550</div>
<div class="t  c" style="left:-85.5px;top:51.0px">4600</div>
<div class="t  c" style="left:-33.5px;top:51.0px">4650</div>
<div class="t  c" style="left:18.5px;top:51.0px">4700</div>
<div class="t  c" style="left:70.5px;top:51.0px">4750</div>
<div class="t  c" style="left:122.5px;top:51.0px">4800</div>
<div class="t  c" style="left:174.5px;top:51.0px">4850</div>
<div class="t  c" style="left:227.5px;top:51.0px">4900</div>
<div class="t  c" style="left:279.5px;top:51.0px">4950</div>
<div class="t  c" style="left:331.5px;top:51.0px">5000</div>
<div class="t  c" style="left:383.5px;top:51.0px">5050</div>
<div class="t  c" style="left:435.5px;top:51.0px">5100</div>
<div class="t  c" style="left:487.5px;top:51.0px">5150</div>
<div class="t  c" style="left:539.5px;top:51.0px">5200</div>
<div class="t  c" style="left:592.5px;top:51.0px">5250</div>
<div class="t  c" style="left:644.5px;top:51.0px">5300</div>
<div class="t  c" style="left:696.5px;top:51.0px">5350</div>
<div class="t  c" style="left:748.5px;top:51.0px">5400</div>
<div class="t  c" style="left:800.5px;top:51.0px">5450</div>
<div class="t  c" style="left:852.5px;top:51.0px">5500</div>
<div class="t  c" style="left:904.5px;top:51.0px">5550</div>
<div class="t  c" style="left:956.5px;top:51.0px">5600</div>
<div class="t  c" style="left:1009.5px;top:51.0px">5650</div>
<div class="t  c" style="left:1061.5px;top:51.0px">5700</div>
<div class="t  c" style="left:1113.5px;top:51.0px">5750</div>
<div class="t  c" style="left:1165.5px;top:51.0px">5800</div>
<div class="t  c" style="left:1203.0px;top:51.0px">5837</div>
<div class="t " style="right:1876.0px;top:64.0px">200</div>
<div class="t " style="right:1876.0px;top:85.5px">195</div>
<div class="t " style="right:1876.0px;top:107.0px">190</div>
<div class="t " style="right:1876.0px;top:128.5px">185</div>
<div class="t " style="right:1876.0px;top:150.0px">180</div>
<div class="t " style="right:1876.0px;top:171.5px">175</div>
<div class="t " style="right:1876.0px;top:193.0px">170</div>
<div class="t " style="right:1876.0px;top:214.5px">165</div>
<div class="t " style="right:1876.0px;top:236.0px">160</div>
<div class="t " style="right:1876.0px;top:257.5px">155</div>
<div class="t " style="right:1876.0px;top:279.0px">150</div>
<div class="t " style="right:1876.0px;top:300.5px">145</div>
<div class="t " style="right:1876.0px;top:322.0px">140</div>
<div class="t " style="right:1876.0px;top:343.5px">135</div>
<div class="t " style="right:1876.0px;top:365.0px">130</div>
<div class="t " style="right:1876.0px;top:386.5px">125</div>
<div class="t " style="right:1876.0px;top:408.0px">120</div>
<div class="t " style="right:1876.0px;top:429.5px">115</div>
<div class="t " style="right:1876.0px;top:451.0px">110</div>
<div class="t " style="right:1876.0px;top:472.5px">105</div>
<div class="t " style="right:1876.0px;top:494.0px">100</div>
<div class="t " style="right:1876.0px;top:515.5px">95</div>
<div class="t " style="right:1876.0px;top:537.0px">90</div>
<div class="t " style="right:1876.0px;top:558.5px">85</div>
<div class="t " style="right:1876.0px;top:580.0px">80</div>
<div class="t " style="right:1876.0px;top:601.5px">75</div>
<div class="t " style="right:1876.0px;top:623.0px">70</div>
<div class="t " style="right:1876.0px;top:644.5px">65</div>
<div class="t " style="right:1876.0px;top:666.0px">60</div>
<div class="t " style="right:1876.0px;top:687.5px">55</div>
<div class="t " style="right:1876.0px;top:709.0px">50</div>
<div class="t " style="right:1876.0px;top:730.5px">45</div>
<div class="t " style="right:1876.0px;top:752.0px">40</div>
<div class="t " style="right:1876.0px;top:773.5px">35</div>
<div class="t " style="right:1876.0px;top:795.0px">30</div>
<div class="t " style="right:1876.0px;top:816.5px">25</div>
<div class="t " style="right:1876.0px;top:838.0px">20</div>
<div class="t " style="right:1876.0px;top:859.5px">15</div>
<div class="t " style="right:1876.0px;top:881.0px">10</div>
<div class="t " style="right:1876.0px;top:902.5px">5</div>
<div class="t " style="right:1876.0px;top:924.0px">0</div>
<div class="t  c" style="left:-547.5px;top:938.0px;transform:scaleX(0.970)">15:37:03.542</div>
<div class="t  c" style="left:-547.5px;top:950.0px;transform:scaleX(0.970)">03/25/2026</div>
<div class="t  c" style="left:-426.3px;top:938.0px;transform:scaleX(0.970)">15:45:00.000</div>
<div class="t  c" style="left:-426.3px;top:950.0px;transform:scaleX(0.970)">03/25/2026</div>
<div class="t  c" style="left:-349.9px;top:938.0px;transform:scaleX(0.970)">15:50:00.000</div>
<div class="t  c" style="left:-349.9px;top:950.0px;transform:scaleX(0.970)">03/25/2026</div>
<div class="t  c" style="left:-273.6px;top:938.0px;transform:scaleX(0.970)">15:55:00.000</div>
<div class="t  c" style="left:-273.6px;top:950.0px;transform:scaleX(0.970)">03/25/2026</div>
<div class="t  c" style="left:-197.2px;top:938.0px;transform:scaleX(0.970)">16:00:00.000</div>
<div class="t  c" style="left:-197.2px;top:950.0px;transform:scaleX(0.970)">03/25/2026</div>
<div class="t  c" style="left:-120.9px;top:938.0px;transform:scaleX(0.970)">16:05:00.000</div>
<div class="t  c" style="left:-120.9px;top:950.0px;transform:scaleX(0.970)">03/25/2026</div>
<div class="t  c" style="left:-44.6px;top:938.0px;transform:scaleX(0.970)">16:10:00.000</div>
<div class="t  c" style="left:-44.6px;top:950.0px;transform:scaleX(0.970)">03/25/2026</div>
<div class="t  c" style="left:31.8px;top:938.0px;transform:scaleX(0.970)">16:15:00.000</div>
<div class="t  c" style="left:31.8px;top:950.0px;transform:scaleX(0.970)">03/25/2026</div>
<div class="t  c" style="left:108.1px;top:938.0px;transform:scaleX(0.970)">16:20:00.000</div>
<div class="t  c" style="left:108.1px;top:950.0px;transform:scaleX(0.970)">03/25/2026</div>
<div class="t  c" style="left:184.4px;top:938.0px;transform:scaleX(0.970)">16:25:00.000</div>
<div class="t  c" style="left:184.4px;top:950.0px;transform:scaleX(0.970)">03/25/2026</div>
<div class="t  c" style="left:260.8px;top:938.0px;transform:scaleX(0.970)">16:30:00.000</div>
<div class="t  c" style="left:260.8px;top:950.0px;transform:scaleX(0.970)">03/25/2026</div>
<div class="t  c" style="left:337.1px;top:938.0px;transform:scaleX(0.970)">16:35:00.000</div>
<div class="t  c" style="left:337.1px;top:950.0px;transform:scaleX(0.970)">03/25/2026</div>
<div class="t  c" style="left:413.5px;top:938.0px;transform:scaleX(0.970)">16:40:00.000</div>
<div class="t  c" style="left:413.5px;top:950.0px;transform:scaleX(0.970)">03/25/2026</div>
<div class="t  c" style="left:489.8px;top:938.0px;transform:scaleX(0.970)">16:45:00.000</div>
<div class="t  c" style="left:489.8px;top:950.0px;transform:scaleX(0.970)">03/25/2026</div>
<div class="t  c" style="left:566.1px;top:938.0px;transform:scaleX(0.970)">16:50:00.000</div>
<div class="t  c" style="left:566.1px;top:950.0px;transform:scaleX(0.970)">03/25/2026</div>
<div class="t  c" style="left:642.5px;top:938.0px;transform:scaleX(0.970)">16:55:00.000</div>
<div class="t  c" style="left:642.5px;top:950.0px;transform:scaleX(0.970)">03/25/2026</div>
<div class="t  c" style="left:718.8px;top:938.0px;transform:scaleX(0.970)">17:00:00.000</div>
<div class="t  c" style="left:718.8px;top:950.0px;transform:scaleX(0.970)">03/25/2026</div>
<div class="t  c" style="left:795.1px;top:938.0px;transform:scaleX(0.970)">17:05:00.000</div>
<div class="t  c" style="left:795.1px;top:950.0px;transform:scaleX(0.970)">03/25/2026</div>
<div class="t  c" style="left:871.5px;top:938.0px;transform:scaleX(0.970)">17:10:00.000</div>
<div class="t  c" style="left:871.5px;top:950.0px;transform:scaleX(0.970)">03/25/2026</div>
<div class="t  c" style="left:947.8px;top:938.0px;transform:scaleX(0.970)">17:15:00.000</div>
<div class="t  c" style="left:947.8px;top:950.0px;transform:scaleX(0.970)">03/25/2026</div>
<div class="t  c" style="left:1024.2px;top:938.0px;transform:scaleX(0.970)">17:20:00.000</div>
<div class="t  c" style="left:1024.2px;top:950.0px;transform:scaleX(0.970)">03/25/2026</div>
<div class="t  c" style="left:1100.5px;top:938.0px;transform:scaleX(0.970)">17:25:00.000</div>
<div class="t  c" style="left:1100.5px;top:950.0px;transform:scaleX(0.970)">03/25/2026</div>
<div class="t  c" style="left:1203.0px;top:938.0px;transform:scaleX(0.970)">17:31:44.822</div>
<div class="t  c" style="left:1203.0px;top:950.0px;transform:scaleX(0.970)">03/25/2026</div>
<div class="t " style="left:915.4px;top:964.0px;transform:scaleX(0.820);transform-origin:0 0">Time</div>
<div class="t " style="left:1868.0px;top:73.0px">-5.00</div>
<div class="t " style="left:1868.0px;top:501.0px">-9.00</div>
<div class="t " style="left:1868.0px;top:929.0px">-13.00</div>
<div class="t" style="left:1913px;top:508px;transform:translate(-50%,-50%) rotate(90deg);">Amplitude(Log10(g^2/Hz))</div>
</body></html>
